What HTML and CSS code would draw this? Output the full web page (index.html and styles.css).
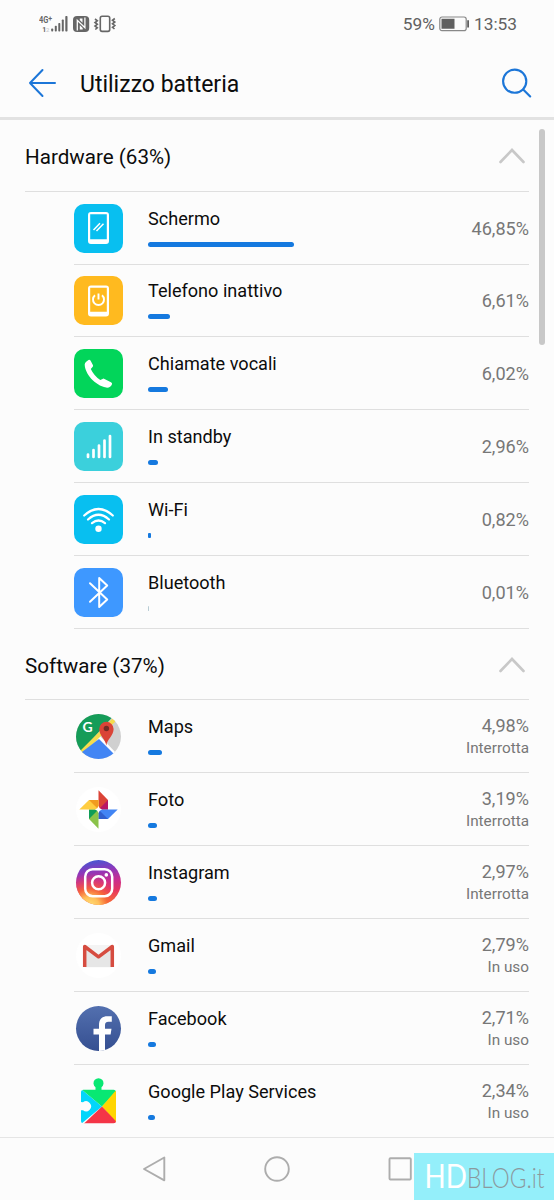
FILE: index.html
```html
<!DOCTYPE html>
<html lang="it">
<head>
<meta charset="utf-8">
<title>Utilizzo batteria</title>
<link rel="stylesheet" href="styles.css">
</head>
<body>
<div class="screen">
  <div class="status">
    <svg class="status-left" width="78" height="18" viewBox="0 0 78 18">
      <g fill="#666"><text class="net" transform="translate(0 8) scale(.76 1)">4G</text><text class="net-small" x="9.2" y="5.5">+</text><text class="net-small" x="3.2" y="16.6">1</text><text class="net-faint" x="7" y="16.6">2</text>
      <rect x="12.2" y="13.5" width="2" height="3" rx=".7"/><rect x="15.8" y="10.8" width="2" height="5.7" rx=".7"/><rect x="19.3" y="8" width="2" height="8.5" rx=".7"/><rect x="22.8" y="4.5" width="2" height="12" rx=".7"/><rect x="26.3" y="1" width="2.2" height="15.5" rx=".7"/>
      <rect x="34" y="1" width="16.2" height="16" rx="4"/></g>
      <path d="M38.3 15.500V5.200l7.600 7.600V2.500" fill="none" stroke="#fcfcfc" stroke-width="1.3"/>
      <path d="M40.8 3.500 43.500 3.500v4.300l-2.700-2.800zM40.800 14.500v-4.300l2.900 2.900v1.400z" fill="#fcfcfc"/>
      <g fill="none" stroke="#666" stroke-width="1.6"><rect x="61.3" y="1.2" width="9.4" height="15.2" rx="1.8"/><path d="M56 4l2.300 1.800L56 7.500l2.300 1.800L56 11l2.300 1.800-2 1.700M75.800 3.500l-2.300 1.800 2.300 1.700-2.300 1.800 2.300 1.800-2.300 1.700 2 1.700"/></g>
    </svg>
    <div class="status-right">
      <span>59%</span>
      <svg width="31" height="16" viewBox="0 0 31 16"><rect x=".8" y="1" width="26.400" height="13.600" rx="2.200" fill="none" stroke="#888" stroke-width="1.200"/><path d="M2.500 2.800h13v10h-13zM28.200 4.300h1.800v7.200h-1.800z" fill="#606060"/></svg>
      <span>13:53</span>
    </div>
  </div>
  <header class="toolbar">
    <svg width="30" height="30" viewBox="0 0 30 30" fill="none" stroke="#1c76d8" stroke-width="2" stroke-linecap="round" stroke-linejoin="round"><path d="M27 15H2M14.500 2 2 15l12.500 13"/></svg>
    <h1>Utilizzo batteria</h1>
    <svg width="30" height="30" viewBox="0 0 30 30" fill="none" stroke="#1c76d8" stroke-width="2.100" stroke-linecap="round"><circle cx="12.700" cy="13.200" r="11.600"/><path d="m21.200 21.500 7 7"/></svg>
  </header>
  <main class="content">
    <section>
      <div class="group"><h2>Hardware (63%)</h2><svg width="27" height="16" viewBox="0 0 27 16"><path class="chevron" d="M2.500 14 14 2 25.500 14"/></svg></div>
      <ul>
        <li class="row">
          <svg class="icon" viewBox="0 0 49 49"><rect width="49" height="49" rx="10" fill="#08bff0"/><path fill="#fff" fill-rule="evenodd" d="M17 8h15a3 3 0 0 1 3 3v26a3 3 0 0 1-3 3H17a3 3 0 0 1-3-3V11a3 3 0 0 1 3-3zm-.8 2.200v25h16.600v-25z"/><path d="m19.500 26 6.500-6.800M22.500 27l7-7.300" stroke="#fff" stroke-width="1.500"/></svg>
          <div class="info"><span class="name">Schermo</span><span class="bar" style="width:146px"></span></div><div class="value">46,85%</div>
        </li>
        <li class="row">
          <svg class="icon" viewBox="0 0 49 49"><rect width="49" height="49" rx="10" fill="#ffba1f"/><path fill="#fff" fill-rule="evenodd" d="M17 9.500h15a3 3 0 0 1 3 3v25a3 3 0 0 1-3 3H17a3 3 0 0 1-3-3v-25a3 3 0 0 1 3-3zm-.8 2.200v24h16.600v-24z"/><path d="M21 19.300a5.500 5.500 0 1 0 7 0M24.500 17.500v6" fill="none" stroke="#fff" stroke-width="1.900"/></svg>
          <div class="info"><span class="name">Telefono inattivo</span><span class="bar" style="width:21.500px"></span></div><div class="value">6,61%</div>
        </li>
        <li class="row">
          <svg class="icon" viewBox="0 0 49 49"><rect width="49" height="49" rx="10" fill="#02d55a"/><path fill="#fff" d="m12.200 12.700 2.300-1.800q1.200-.5 2 .6l2.500 4.800q.4 1.100-.7 2l-1.500 1.600q3 6.500 9.500 11.200l2.200-1.200q1-.6 2 .1l6.500 3.200q1.600.9.900 2.300-1.300 3.500-5.700 3.100C21 36.500 10.800 24.500 10.700 15.500q.1-1.700 1.500-2.800z"/></svg>
          <div class="info"><span class="name">Chiamate vocali</span><span class="bar" style="width:19.500px"></span></div><div class="value">6,02%</div>
        </li>
        <li class="row">
          <svg class="icon" viewBox="0 0 49 49"><rect width="49" height="49" rx="10" fill="#3bd0dc"/><path d="M14 32.500v2.500M19.500 28v7M25 23.500v11.500M30.500 18.500V35M36 14v21" stroke="#fff" stroke-width="2.700" stroke-linecap="round"/></svg>
          <div class="info"><span class="name">In standby</span><span class="bar" style="width:9.500px"></span></div><div class="value">2,96%</div>
        </li>
        <li class="row">
          <svg class="icon" viewBox="0 0 49 49"><rect width="49" height="49" rx="10" fill="#08bff0"/><g fill="none" stroke="#fff" stroke-width="2.200" stroke-linecap="round"><path d="M10.200 20.500q14.300-13 28.600 0M14 24.500q10.500-9.500 21 0M18 28.200q6.500-5.400 13 0"/></g><circle cx="24.500" cy="33.700" r="3.200" fill="#fff"/></svg>
          <div class="info"><span class="name">Wi-Fi</span><span class="bar tiny" style="width:3px"></span></div><div class="value">0,82%</div>
        </li>
        <li class="row">
          <svg class="icon" viewBox="0 0 49 49"><rect width="49" height="49" rx="10" fill="#3e98ff"/><path d="m16 15.300 17.200 16.200-8 7.500V10l8 7.500L16 33.700" fill="none" stroke="#fff" stroke-width="2" stroke-linecap="round" stroke-linejoin="round"/></svg>
          <div class="info"><span class="name">Bluetooth</span><span class="bar trace" style="width:1px"></span></div><div class="value">0,01%</div>
        </li>
      </ul>
    </section>
    <section>
      <div class="group"><h2>Software (37%)</h2><svg width="27" height="16" viewBox="0 0 27 16"><path class="chevron" d="M2.500 14 14 2 25.500 14"/></svg></div>
      <ul>
        <li class="row">
          <svg class="icon" viewBox="0 0 49 49"><defs><clipPath id="disc"><circle cx="24.500" cy="24.500" r="22.500"/></clipPath></defs><g clip-path="url(#disc)"><path fill="#d0d0d0" d="M0 0h49v49H0z"/><path fill="#159c58" d="M0 0h43L4 43H0z"/><path fill="#fff" d="m25 23 17 18-4 4-15-16z"/><path d="M5 43 42 6" stroke="#f5dc4d" stroke-width="4"/><path fill="#4285f4" d="m25 27 16 16v5H4v-5z"/></g><text class="maps-g" x="8.500" y="20.300">G</text><path fill="#da4437" d="M32.300 33.500c-.8-6-7.100-10-7.100-16.500a7.200 7.200 0 0 1 14.400 0c0 6.500-6.500 10.500-7.300 16.500z"/><circle cx="32.400" cy="16.500" r="2.700" fill="#722b25"/></svg>
          <div class="info"><span class="name">Maps</span><span class="bar" style="width:14px"></span></div><div class="value">4,98%<small>Interrotta</small></div>
        </li>
        <li class="row">
          <svg class="icon" viewBox="0 0 49 49"><circle cx="24.500" cy="24.500" r="22.500" fill="#fff"/><path fill="#db4437" d="M24.500 5.300 34 15v9.500h-9.500z"/><path fill="#b81767" d="M24.500 24.500 34 15v9.500z"/><path fill="#4285f4" d="M43.700 24.500 34 34h-9.500v-9.500z"/><path fill="#3060ce" d="M24.500 24.500 34 34h-9.500z"/><path fill="#8bc34a" d="M24.500 43.700 15 34v-9.500h9.500z"/><path fill="#109d58" d="M24.500 24.500 15 34v-9.500z"/><path fill="#ffcd40" d="M5.300 24.500 15 15h9.500v9.500z"/><path fill="#f19b20" d="M24.500 24.500 15 15h9.500z"/><path fill="#fff" d="m24.500 21 1.200 2.300 2.300 1.200-2.300 1.200-1.200 2.300-1.200-2.300-2.300-1.200 2.300-1.200z"/></svg>
          <div class="info"><span class="name">Foto</span><span class="bar" style="width:9px"></span></div><div class="value">3,19%<small>Interrotta</small></div>
        </li>
        <li class="row">
          <svg class="icon" viewBox="0 0 49 49"><defs><linearGradient id="ig" x1=".5" y1="0" x2=".65" y2="1"><stop stop-color="#4b55d0"/><stop offset=".22" stop-color="#8b38bc"/><stop offset=".48" stop-color="#c82d91"/><stop offset=".72" stop-color="#e5345f"/><stop offset="1" stop-color="#f47a35"/></linearGradient><radialGradient id="glow" cx=".3" cy="1.050" r=".75"><stop stop-color="#ffe579"/><stop offset=".3" stop-color="#ffc05b"/><stop offset=".55" stop-color="#f86b35" stop-opacity=".85"/><stop offset="1" stop-color="#ef335f" stop-opacity="0"/></radialGradient></defs><circle cx="24.500" cy="24.500" r="22.500" fill="url(#ig)"/><circle cx="24.500" cy="24.500" r="22.500" fill="url(#glow)"/><g fill="none" stroke="#fff" stroke-width="2.500"><rect x="11.200" y="11.200" width="27" height="27" rx="7.500"/><circle cx="24.600" cy="24.700" r="6.500"/></g><circle cx="32.300" cy="16.900" r="1.800" fill="#fff"/></svg>
          <div class="info"><span class="name">Instagram</span><span class="bar" style="width:8.500px"></span></div><div class="value">2,97%<small>Interrotta</small></div>
        </li>
        <li class="row">
          <svg class="icon" viewBox="0 0 49 49"><circle cx="24.500" cy="24.500" r="22.500" fill="#fff"/><rect x="9" y="14" width="31" height="22.300" rx="2" fill="#eee"/><path fill="#d9d9d9" d="m12 36 12.500-11L37 36z"/><path fill="#e6e6e6" d="m12 17 12.500 11L37 17v19H12z"/><path fill="#f4f4f4" d="M12 14h25L24.500 24.500z"/><path d="M10.700 36V15.500l13.800 10.300 13.800-10.300V36" fill="none" stroke="#d64c40" stroke-width="3.500" stroke-linejoin="round"/></svg>
          <div class="info"><span class="name">Gmail</span><span class="bar" style="width:8px"></span></div><div class="value">2,79%<small>In uso</small></div>
        </li>
        <li class="row">
          <svg class="icon" viewBox="0 0 49 49"><defs><linearGradient id="fb" x2="0" y2="1"><stop stop-color="#5370af"/><stop offset="1" stop-color="#354f91"/></linearGradient></defs><circle cx="24.500" cy="24.500" r="22.500" fill="url(#fb)"/><path fill="#fff" d="M25 46.900V30.500h-5.500v-5.700H25v-3.500c0-6 3-9 8.300-9h4.500v5.400h-3.300c-2.600 0-3.500 1.200-3.500 3.500v3.600h6.500l-.9 5.700H31v15.400q-3 1-6 1z"/></svg>
          <div class="info"><span class="name">Facebook</span><span class="bar" style="width:7.500px"></span></div><div class="value">2,71%<small>In uso</small></div>
        </li>
        <li class="row">
          <svg class="icon" viewBox="0 0 49 49"><defs><clipPath id="piece"><path clip-rule="evenodd" d="M9.500 12.700h12v-2.500a5 5 0 1 1 6 0v2.500h12q2.500 0 2.500 2.500v28.500q0 2.500-2.500 2.500h-30Q7 46.200 7 43.700V33.200l2 .1a5 5 0 1 0 0-8L7 25V15.200q0-2.500 2.500-2.500z"/></clipPath></defs><g clip-path="url(#piece)"><path fill="#02d6fb" d="M7 12v35l21-17.500z"/><path fill="#08e873" d="M7 12V0h35v15L28 29.500 8 12.700z"/><path fill="#ffd500" d="M43 12v35L28 29.500z"/><path fill="#f43547" d="m28 29.500 17 18H9z"/></g></svg>
          <div class="info"><span class="name">Google Play Services</span><span class="bar" style="width:7px"></span></div><div class="value">2,34%<small>In uso</small></div>
        </li>
      </ul>
    </section>
    <div class="scrollbar"></div>
  </main>
  <footer class="nav">
    <svg viewBox="0 0 28 28"><path d="M24.300 2.500v22.800L4 14z"/></svg>
    <svg viewBox="0 0 28 28"><circle cx="14" cy="14" r="11.800"/></svg>
    <svg viewBox="0 0 28 28"><rect x="3.500" y="3.200" width="21.300" height="21.300" rx="1"/></svg>
    <svg class="brand" width="140" height="47" viewBox="0 0 140 47"><rect width="140" height="47" fill="#94effa"/><text class="brand-hd" transform="translate(10.500 34.700) scale(.87 1)">HD</text><text class="brand-blog" transform="translate(53 34.700) scale(.84 1)">BLOG.it</text></svg>
  </footer>
</div>
</body>
</html>
```
FILE: styles.css
```css
* { box-sizing: border-box; }
body { margin: 0; background: #fcfcfc; color: #0c0c0c; font-family: Roboto, sans-serif; }
h1, h2, ul { margin: 0; padding: 0; font-weight: 400; list-style: none; }
svg { display: block; flex: none; }
.screen { width: 554px; height: 1200px; overflow: hidden; display: flex; flex-direction: column; }
.status { height: 47px; padding: 0 37px 0 39px; display: flex; justify-content: space-between; align-items: center; }
.status-right { display: flex; align-items: center; gap: 4px; color: #616161; font-size: 17.300px; }
.net { font: 700 9.800px Roboto, sans-serif; }
.net-small { font: 700 7px Roboto, sans-serif; }
.net-faint { font: 500 6px Roboto, sans-serif; fill: #ccc; }
.toolbar { height: 73px; padding: 2px 22px 0 28px; display: flex; align-items: center; border-bottom: 3px solid #e2e2e2; }
.toolbar h1 { flex: 1; margin-left: 22px; padding-top: 3px; font-size: 23px; line-height: 30px; }
.content { position: relative; height: 1017.400px; flex: none; }
.group { height: 71.700px; margin: 0 25px; padding: 2px 4px 0 0; display: flex; align-items: center; justify-content: space-between; border-bottom: 1px solid #dfdfdf; }
.group h2 { padding-top: 1px; font-size: 20.600px; line-height: 26px; }
.chevron { fill: none; stroke: #c8c8c8; stroke-width: 2.600; stroke-linecap: round; }
.row { height: 72.850px; margin: 0 25px 0 74px; padding-top: 1px; display: flex; align-items: center; border-bottom: 1px solid #dfdfdf; }
.icon { width: 49px; height: 49px; margin-right: 25px; }
.info { flex: 1; display: flex; flex-direction: column; gap: 11px; padding-bottom: 3px; }
.name { font-size: 18.100px; line-height: 24px; }
.bar { height: 5px; border-radius: 2.500px; background: #1579df; }
.tiny { border-radius: 1px; }
.trace { background: #b8ccd4; }
.value { color: #777; font-size: 18.100px; line-height: 23px; text-align: right; }
.value small { display: block; font-size: 15.300px; line-height: 22px; }
.scrollbar { position: absolute; top: 9px; right: 9px; width: 6px; height: 216px; border-radius: 3px; background: #c8c8c8; }
.nav { position: relative; flex: 1; display: flex; align-items: center; justify-content: center; gap: 95px; border-top: 1px solid #e5e5e5; }
.nav > svg:not(.brand) { width: 28px; height: 28px; fill: none; stroke: #adadad; stroke-width: 1.900; stroke-linejoin: round; }
.brand { position: absolute; right: 0; bottom: 0; }
.brand-hd { font: 400 32px Lato, sans-serif; fill: #fff; }
.brand-blog { font: 300 27px Lato, sans-serif; fill: #8b999e; }
.maps-g { font: 700 14px Lato, sans-serif; fill: #fff; }
```
